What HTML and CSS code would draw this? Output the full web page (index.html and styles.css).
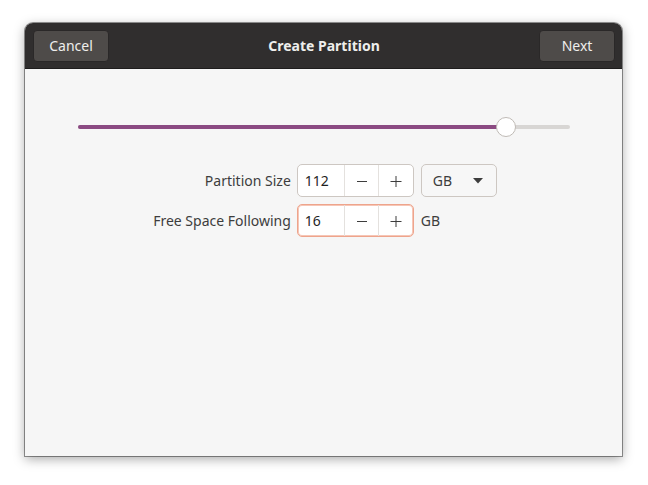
FILE: index.html
```html
<!DOCTYPE html>
<html>
<head>
<meta charset="utf-8">
<link rel="stylesheet" href="styles.css">
</head>
<body>
<div class="window">
  <div class="header">
    <button class="hbtn">Cancel</button>
    <div class="title">Create Partition</div>
    <button class="hbtn">Next</button>
  </div>
  <div class="content">
    <div class="slider">
      <div class="track">
        <div class="fill" style="width: 87%"></div>
        <div class="knob" style="left: 87%"></div>
      </div>
    </div>
    <div class="form">
      <div class="label">Partition Size</div>
      <div class="controls">
        <div class="spin">
          <div class="entry">112</div>
          <div class="sbtn"><svg width="12" height="12" viewBox="0 0 12 12"><path d="M1 6.5h10" stroke="#3d3d3d" stroke-width="1"/></svg></div>
          <div class="sbtn"><svg width="12" height="12" viewBox="0 0 12 12"><path d="M0.5 6.5h11M6 1v11" stroke="#3d3d3d" stroke-width="1"/></svg></div>
        </div>
        <div class="combo"><span>GB</span><svg width="10" height="6" viewBox="0 0 10 6"><path d="M0 0h10L5 5.5z" fill="#3d3d3d"/></svg></div>
      </div>
      <div class="label">Free Space Following</div>
      <div class="controls">
        <div class="spin focus">
          <div class="entry">16</div>
          <div class="sbtn"><svg width="12" height="12" viewBox="0 0 12 12"><path d="M1 6.5h10" stroke="#3d3d3d" stroke-width="1"/></svg></div>
          <div class="sbtn"><svg width="12" height="12" viewBox="0 0 12 12"><path d="M0.5 6.5h11M6 1v11" stroke="#3d3d3d" stroke-width="1"/></svg></div>
        </div>
        <div class="unit">GB</div>
      </div>
    </div>
  </div>
</div>
</body>
</html>
```
FILE: styles.css
```css
* { box-sizing: border-box; }
html, body { margin: 0; padding: 0; background: #ffffff; }
body {
  font-family: "Noto Sans", "DejaVu Sans", sans-serif;
  font-size: 14px;
  color: #3d3d3d;
  padding: 23px 0 29px 25px;
  min-height: 485px;
}
.window {
  width: 597px;
  height: 433px;
  display: flex;
  flex-direction: column;
  border-radius: 8px 8px 0 0;
  box-shadow: 0 0 0 1px rgba(0,0,0,0.4), 0 3px 12px rgba(0,0,0,0.35);
  background: #f6f6f6;
  overflow: hidden;
}
.header {
  height: 46px;
  background: #302e2e;
  display: flex;
  align-items: center;
  justify-content: space-between;
  padding: 0 7px 0 8px;
  border-bottom: 1px solid #1e1d1d;
}
.hbtn {
  width: 76px;
  height: 32px;
  background: #4e4b49;
  border: 1px solid #2a2828;
  border-radius: 4px;
  color: #eeeeec;
  font-family: inherit;
  font-size: 14px;
  padding: 0;
}
.title {
  color: #eeeeec;
  font-weight: bold;
  font-size: 14px;
}
.content {
  flex: 1;
  display: flex;
  flex-direction: column;
  padding: 48px 52px 0 53px;
}
.slider {
  height: 20px;
  display: flex;
  align-items: center;
}
.track {
  position: relative;
  width: 100%;
  height: 4px;
  background: #d8d6d4;
  border-radius: 2px;
}
.fill {
  height: 4px;
  background: #8b4a82;
  border-radius: 2px;
}
.knob {
  position: absolute;
  top: -8px;
  width: 20px;
  height: 20px;
  margin-left: -10px;
  border-radius: 50%;
  background: #ffffff;
  border: 1px solid #bfbab5;
}
.form {
  margin-top: 27px;
  align-self: center;
  display: grid;
  grid-template-columns: auto auto;
  column-gap: 6px;
  row-gap: 7px;
  margin-left: 2px;
}
.label {
  text-align: right;
  align-self: center;
}
.controls {
  display: flex;
  align-items: center;
  gap: 7px;
}
.spin {
  display: flex;
  width: 117px;
  height: 33px;
  background: #ffffff;
  border: 1px solid #cdc7c2;
  border-radius: 5px;
}
.spin.focus {
  border-color: #eea48c;
  box-shadow: inset 0 0 0 1px #f6c6b6;
}
.entry {
  width: 46px;
  padding-left: 7px;
  display: flex;
  align-items: center;
  color: #1f1f1f;
}
.sbtn {
  flex: 1;
  border-left: 1px solid #e4e1de;
  display: flex;
  align-items: center;
  justify-content: center;
}
.combo {
  width: 76px;
  height: 33px;
  background: #f7f7f7;
  border: 1px solid #cdc7c2;
  border-radius: 5px;
  display: flex;
  align-items: center;
  justify-content: space-between;
  padding: 0 13px 0 11px;
}
```
